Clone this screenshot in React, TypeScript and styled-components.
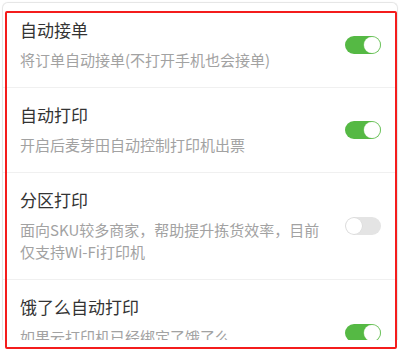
import React from "react";
import styled, { createGlobalStyle } from "styled-components";

const GlobalStyle = createGlobalStyle`
  html, body {
    margin: 0;
    padding: 0;
    background: #ffffff;
  }
  body {
    font-family: "Noto Sans CJK SC", "Noto Sans", "Liberation Sans", sans-serif;
  }
  * { box-sizing: border-box; }
`;

const Page = styled.div`
  position: relative;
  width: 400px;
  height: 355px;
  padding: 2px 2px 0 2px;
  background: #ffffff;
  overflow: hidden;
`;

const Card = styled.div`
  height: 338px;
  border: 1px solid #e6e6e6;
  border-bottom: none;
  border-radius: 6px 6px 0 0;
  background: #ffffff;
  overflow: hidden;
  box-shadow: 0 0 2px rgba(0, 0, 0, 0.04);
`;

const Row = styled.div<{ $minH?: number }>`
  display: flex;
  align-items: center;
  gap: 15px;
  padding: 15px 16px 16px 17px;
  min-height: ${(p) => (p.$minH ? `${p.$minH}px` : "auto")};
  border-bottom: 1px solid #f0f0f0;
`;

const TextCol = styled.div`
  flex: 1;
  min-width: 0;
  align-self: flex-start;
  display: flex;
  flex-direction: column;
  gap: 7px;
`;

const Title = styled.div`
  font-size: 17px;
  line-height: 24px;
  color: #333333;
`;

const Desc = styled.div`
  font-size: 15px;
  line-height: 22px;
  color: #a2a2a2;
`;

const Track = styled.div<{ $on: boolean }>`
  position: relative;
  flex: none;
  width: 36px;
  height: 18px;
  border-radius: 9px;
  background: ${(p) => (p.$on ? "#55b944" : "#e4e4e4")};
`;

const Knob = styled.div<{ $on: boolean }>`
  position: absolute;
  top: 1px;
  left: ${(p) => (p.$on ? "19px" : "1px")};
  width: 16px;
  height: 16px;
  border-radius: 50%;
  background: #ffffff;
  box-shadow: 0 0 0 0.5px ${(p) => (p.$on ? "#8fd07f" : "#d6d6d6")};
`;

const Annotation = styled.div`
  position: absolute;
  left: 5px;
  top: 11px;
  width: 392px;
  height: 338px;
  border: 2.5px solid #f41c1c;
  border-radius: 2px;
  pointer-events: none;
`;

type Item = { title: string; desc: string; on: boolean; minH?: number };

const items: Item[] = [
  { title: "自动接单", desc: "将订单自动接单(不打开手机也会接单)", on: true },
  { title: "自动打印", desc: "开启后麦芽田自动控制打印机出票", on: true },
  { title: "分区打印", desc: "面向SKU较多商家，帮助提升拣货效率，目前仅支持Wi-Fi打印机", on: false },
  { title: "饿了么自动打印", desc: "如果云打印机已经绑定了饿了么", on: true, minH: 107 },
];

function Toggle({ on }: { on: boolean }) {
  return (
    <Track $on={on}>
      <Knob $on={on} />
    </Track>
  );
}

export default function App() {
  return (
    <>
      <GlobalStyle />
      <Page>
        <Card>
          {items.map((it) => (
            <Row key={it.title} $minH={it.minH}>
              <TextCol>
                <Title>{it.title}</Title>
                <Desc>{it.desc}</Desc>
              </TextCol>
              <Toggle on={it.on} />
            </Row>
          ))}
        </Card>
        <Annotation />
      </Page>
    </>
  );
}
